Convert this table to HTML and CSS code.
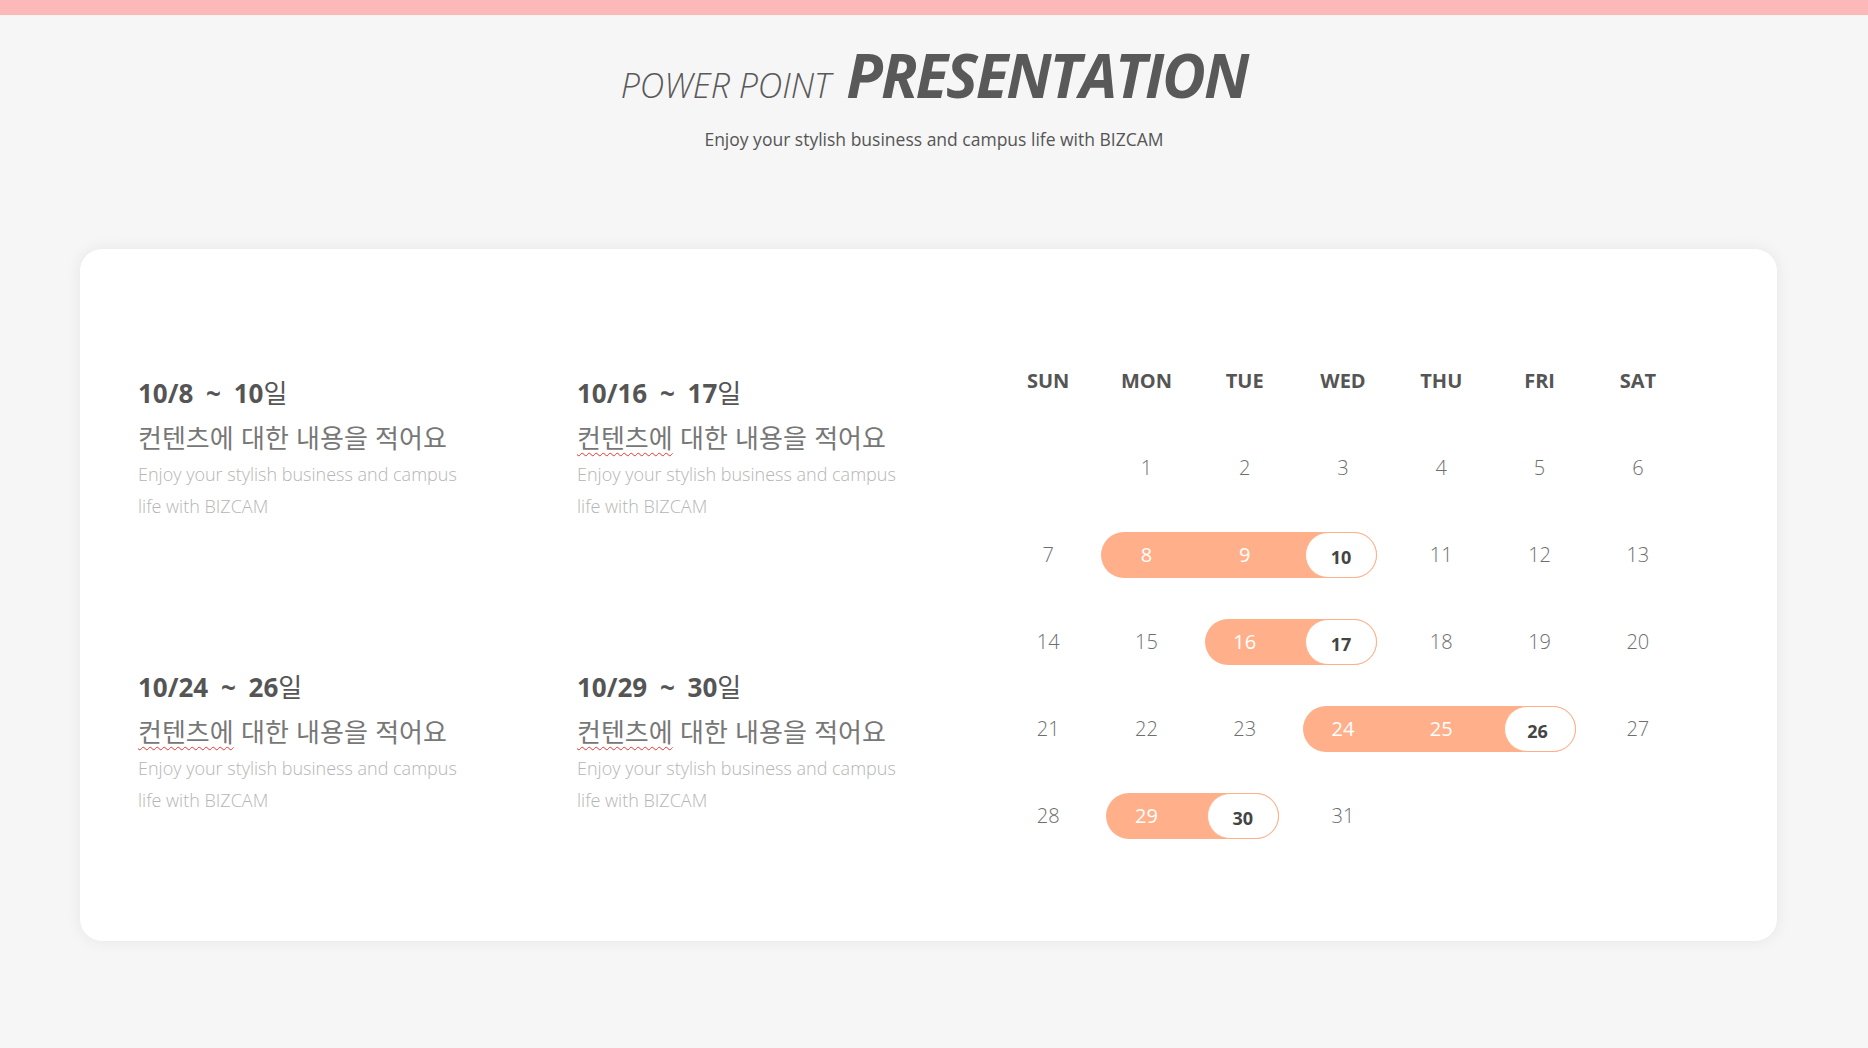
FILE: index.html
```html
<!DOCTYPE html>
<html lang="ko">
<head>
<meta charset="utf-8">
<title>Power Point Presentation</title>
<link rel="stylesheet" href="styles.css">
</head>
<body>
<div class="topbar"></div>
<header class="header">
  <h1 class="title"><span class="title-light">POWER POINT</span> <span class="title-bold">PRESENTATION</span></h1>
  <p class="subtitle">Enjoy your stylish business and campus life with BIZCAM</p>
</header>
<main class="card">
  <section class="events">
    <div class="event">
      <h2 class="event-date"><b>10/8 ~ 10</b>일</h2>
      <p class="event-ko">컨텐츠에 대한 내용을 적어요</p>
      <p class="event-desc">Enjoy your stylish business and campus<br>life with BIZCAM</p>
    </div>
    <div class="event">
      <h2 class="event-date"><b>10/16 ~ 17</b>일</h2>
      <p class="event-ko"><span class="spell">컨텐츠에</span> 대한 내용을 적어요</p>
      <p class="event-desc">Enjoy your stylish business and campus<br>life with BIZCAM</p>
    </div>
    <div class="event">
      <h2 class="event-date"><b>10/24 ~ 26</b>일</h2>
      <p class="event-ko"><span class="spell">컨텐츠에</span> 대한 내용을 적어요</p>
      <p class="event-desc">Enjoy your stylish business and campus<br>life with BIZCAM</p>
    </div>
    <div class="event">
      <h2 class="event-date"><b>10/29 ~ 30</b>일</h2>
      <p class="event-ko"><span class="spell">컨텐츠에</span> 대한 내용을 적어요</p>
      <p class="event-desc">Enjoy your stylish business and campus<br>life with BIZCAM</p>
    </div>
  </section>
  <section class="calendar">
    <div class="week week-head">
      <span>SUN</span><span>MON</span><span>TUE</span><span>WED</span><span>THU</span><span>FRI</span><span>SAT</span>
    </div>
    <div class="week">
      <span></span><span>1</span><span>2</span><span>3</span><span>4</span><span>5</span><span>6</span>
    </div>
    <div class="week">
      <span>7</span>
      <div class="range span3">
        <div class="bar bar-wide"><div class="bar-end"></div></div>
        <span class="d c1">8</span><span class="d c2">9</span><span class="d c3 end">10</span>
      </div>
      <span>11</span><span>12</span><span>13</span>
    </div>
    <div class="week">
      <span>14</span><span>15</span>
      <div class="range span2">
        <div class="bar"><div class="bar-end"></div></div>
        <span class="d c1">16</span><span class="d c2 end">17</span>
      </div>
      <span>18</span><span>19</span><span>20</span>
    </div>
    <div class="week">
      <span>21</span><span>22</span><span>23</span>
      <div class="range span3">
        <div class="bar bar-r"><div class="bar-end"></div></div>
        <span class="d c1">24</span><span class="d c2">25</span><span class="d c3 end">26</span>
      </div>
      <span>27</span>
    </div>
    <div class="week">
      <span>28</span>
      <div class="range span2">
        <div class="bar"><div class="bar-end"></div></div>
        <span class="d c1">29</span><span class="d c2 end">30</span>
      </div>
      <span>31</span><span></span><span></span><span></span>
    </div>
  </section>
</main>
</body>
</html>
```
FILE: styles.css
```css
* { box-sizing: border-box; }
html, body { margin: 0; padding: 0; }
body {
  width: 1868px;
  height: 1048px;
  overflow: hidden;
  background: #f5f6f5;
  font-family: "Open Sans", "Noto Sans CJK KR", sans-serif;
  color: #555;
}
.topbar { height: 15px; background: #fdb9b9; }
.header { text-align: center; }
.title {
  margin: 25px 0 0;
  font-size: 60px;
  line-height: 70px;
  font-weight: 700;
  font-style: italic;
  color: #595959;
}
.title-light {
  font-size: 34px;
  font-weight: 300;
  letter-spacing: 0;
}
.title-bold { letter-spacing: -2px; }
.subtitle {
  margin: 7px 0 0;
  font-size: 17.5px;
  line-height: 24px;
  color: #555;
}
.card {
  margin: 98px 0 0 80px;
  width: 1697px;
  height: 692px;
  background: #fff;
  border-radius: 22px;
  box-shadow: 0 0 16px rgba(0, 0, 0, 0.07);
  display: flex;
  align-items: flex-start;
}
.events {
  margin-top: 126px;
  padding-left: 58px;
  display: grid;
  grid-template-columns: 439px 422px;
  grid-auto-rows: 294px;
}
.event-date {
  margin: 0;
  font-size: 26px;
  line-height: 36px;
  font-weight: 400;
  word-spacing: 6px;
  color: #555;
}
.event-date b { font-weight: 700; }
.event-ko {
  margin: 8px 0 0;
  font-family: "Noto Sans CJK KR", sans-serif;
  font-size: 26px;
  line-height: 36px;
  color: #777;
}
.spell {
  text-decoration: underline wavy #e33;
  text-decoration-thickness: 1px;
  text-underline-offset: 4px;
}
.event-desc {
  margin: 3px 0 0;
  font-size: 18px;
  font-weight: 300;
  line-height: 32px;
  color: #b5b5b5;
}
.calendar {
  margin-top: 88px;
  width: 688px;
}
.week {
  display: grid;
  grid-template-columns: repeat(7, 1fr);
  height: 87px;
  align-items: center;
  text-align: center;
  font-size: 20px;
  font-weight: 300;
  color: #6e6e6e;
}
.week-head { font-weight: 700; color: #555; }
.range {
  display: grid;
  grid-template-columns: repeat(3, 1fr);
  align-items: center;
  height: 100%;
}
.span3 { grid-column: span 3; }
.span2 { grid-column: span 2; grid-template-columns: repeat(2, 1fr); }
.bar {
  grid-row: 1;
  grid-column: 1 / -1;
  height: 46px;
  margin: 0 15px 0 9px;
  background: #ffb08a;
  border-radius: 23px;
  display: flex;
  justify-content: flex-end;
}
.bar-wide { margin-left: 4px; }
.bar-r { margin-right: 13px; }
.bar-end {
  width: 72px;
  height: 100%;
  background: #fff;
  border: 1px solid #ffb08a;
  border-radius: 23px;
}
.d { grid-row: 1; color: #fff; font-weight: 400; }
.c1 { grid-column: 1; }
.c2 { grid-column: 2; }
.c3 { grid-column: 3; }
.d.end {
  color: #444;
  font-weight: 700;
  font-size: 18px;
  padding-top: 4px;
  padding-right: 4px;
}
```
